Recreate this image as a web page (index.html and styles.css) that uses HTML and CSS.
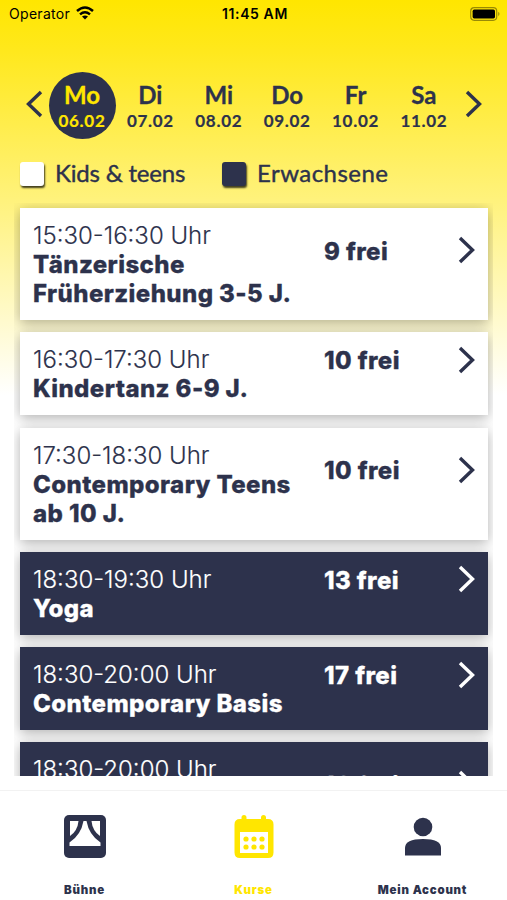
FILE: index.html
```
<!DOCTYPE html>
<html lang="de">
<head>
    <meta charset="UTF-8">
    <meta name="viewport" content="width=device-width, initial-scale=1.0">
    <title>Kurse</title>
    <link rel="stylesheet" href="styles.css">
</head>
<body>

<svg class="sprite" width="0" height="0">
    <symbol id="arrow" viewBox="0 0 17 28">
        <path d="M2 2 L14.5 14 L2 26" fill="none" stroke="currentColor" stroke-width="3.4"/>
    </symbol>
</svg>

<div class="status-bar">
    <div class="operator">
        <span>Operator</span>
        <svg class="wifi" viewBox="0 0 18 14">
            <path d="M1 5 Q9 -2 17 5" fill="none" stroke="#000" stroke-width="2.5"/>
            <path d="M4 8.3 Q9 4 14 8.3" fill="none" stroke="#000" stroke-width="2.4"/>
            <path d="M6 10.6 Q9 8.2 12 10.6 L9 13.6 Z"/>
        </svg>
    </div>
    <div class="clock">11:45 AM</div>
    <svg class="battery" viewBox="0 0 31 14">
        <rect x=".7" y=".7" width="26" height="12.6" rx="3.5" fill="none" stroke="#000" stroke-opacity=".4" stroke-width="1.2"/>
        <rect x="2.6" y="2.6" width="22.4" height="8.8" rx="1.6"/>
        <path d="M28.3 4.8 Q30.6 7 28.3 9.2 Z" fill-opacity=".45"/>
    </svg>
</div>

<div class="days">
    <svg class="arrow flip"><use href="#arrow"/></svg>
    <div class="week">
        <div class="day active"><b>Mo</b><span>06.02</span></div>
        <div class="day"><b>Di</b><span>07.02</span></div>
        <div class="day"><b>Mi</b><span>08.02</span></div>
        <div class="day"><b>Do</b><span>09.02</span></div>
        <div class="day"><b>Fr</b><span>10.02</span></div>
        <div class="day"><b>Sa</b><span>11.02</span></div>
    </div>
    <svg class="arrow"><use href="#arrow"/></svg>
</div>

<div class="legend">
    <div class="legend-item kids"><i class="box"></i><span>Kids &amp; teens</span></div>
    <div class="legend-item adults"><i class="box"></i><span>Erwachsene</span></div>
</div>

<div class="courses">
    <div class="card">
        <div class="info"><div class="time">15:30-16:30 Uhr</div><div class="name">Tänzerische<br>Früherziehung 3-5 J.</div></div>
        <div class="free">9 frei</div>
        <svg class="arrow"><use href="#arrow"/></svg>
    </div>
    <div class="card">
        <div class="info"><div class="time">16:30-17:30 Uhr</div><div class="name">Kindertanz 6-9 J.</div></div>
        <div class="free">10 frei</div>
        <svg class="arrow"><use href="#arrow"/></svg>
    </div>
    <div class="card">
        <div class="info"><div class="time">17:30-18:30 Uhr</div><div class="name">Contemporary Teens<br>ab 10 J.</div></div>
        <div class="free">10 frei</div>
        <svg class="arrow"><use href="#arrow"/></svg>
    </div>
    <div class="card dark">
        <div class="info"><div class="time">18:30-19:30 Uhr</div><div class="name">Yoga</div></div>
        <div class="free">13 frei</div>
        <svg class="arrow"><use href="#arrow"/></svg>
    </div>
    <div class="card dark">
        <div class="info"><div class="time">18:30-20:00 Uhr</div><div class="name">Contemporary Basis</div></div>
        <div class="free">17 frei</div>
        <svg class="arrow"><use href="#arrow"/></svg>
    </div>
    <div class="card dark last">
        <div class="info"><div class="time">18:30-20:00 Uhr</div></div>
        <div class="free">16 frei</div>
        <svg class="arrow"><use href="#arrow"/></svg>
    </div>
</div>

<nav class="tabs">
    <div class="tab">
        <svg viewBox="0 0 44 44">
            <rect x="1" y="1" width="42" height="43" rx="5" fill="#2d324c"/>
            <g fill="#fff">
                <path d="M7 7 H15.5 Q14.5 17 7 22 Z"/>
                <path d="M37 7 H28.5 Q29.5 17 37 22 Z"/>
                <path d="M20.5 7 H23.5 Q26 21 37.5 28.5 V32 H6.5 V28.5 Q18 21 20.5 7 Z"/>
            </g>
        </svg>
        <span>Bühne</span>
    </div>
    <div class="tab active">
        <svg viewBox="0 0 44 44">
            <path d="M8 5 H9.5 V3.5 Q9.5 1 12 1 T14.5 3.5 V5 H29 V3.5 Q29 1 31.5 1 T34 3.5 V5 H36 Q41.5 5 41.5 10.5 V38.5 Q41.5 44 36 44 H8 Q2.5 44 2.5 38.5 V10.5 Q2.5 5 8 5 Z" fill="#ffe600"/>
            <rect x="8" y="18" width="28" height="21" fill="#fff"/>
            <g fill="#ffe600">
                <circle cx="14" cy="25" r="2.6"/>
                <circle cx="22" cy="25" r="2.6"/>
                <circle cx="30" cy="25" r="2.6"/>
                <circle cx="14" cy="33" r="2.6"/>
                <circle cx="22" cy="33" r="2.6"/>
                <circle cx="30" cy="33" r="2.6"/>
            </g>
        </svg>
        <span>Kurse</span>
    </div>
    <div class="tab">
        <svg viewBox="0 0 44 44">
            <g fill="#2d324c">
                <circle cx="22" cy="13" r="9.3"/>
                <path d="M4 41.5 V34 Q4 25 22 25 T40 34 V41.5 Z"/>
            </g>
        </svg>
        <span>Mein Account</span>
    </div>
</nav>

</body>
</html>
```
FILE: styles.css
```
* {
    box-sizing: border-box;
}

body {
    margin: 0;
    height: 900px;
    overflow: hidden;
    display: flex;
    flex-direction: column;
    font-family: Inter, "Liberation Sans", sans-serif;
    color: #2d324c;
    background: linear-gradient(#ffe600 0, #ffe81c 50px, #fff27c 200px, #fff 395px);
}

.sprite {
    position: absolute;
}

/* status bar */
.status-bar {
    height: 28px;
    padding: 0 6px 0 9px;
    display: grid;
    grid-template-columns: 1fr auto 1fr;
    align-items: center;
    font-size: 14px;
    color: #000;
}

.operator {
    display: flex;
    align-items: center;
    gap: 6px;
    letter-spacing: 0.3px;
}

.operator span,
.clock {
    padding-bottom: 1px;
}

.wifi {
    width: 18px;
    height: 14px;
    margin-bottom: 2px;
}

.clock {
    font-weight: 600;
    letter-spacing: 0.6px;
}

.battery {
    width: 31px;
    height: 14px;
    justify-self: end;
    margin-bottom: 1px;
}

/* day picker */
.days {
    height: 67px;
    margin-top: 44px;
    padding: 0 25px 0 26px;
    display: flex;
    align-items: center;
    font-family: Lato, sans-serif;
}

.arrow {
    width: 17px;
    height: 28px;
    flex: none;
}

.flip {
    transform: scaleX(-1);
}

.days .arrow {
    margin-bottom: 3px;
}

.week {
    flex: 1;
    display: flex;
    gap: 1.4px;
    margin-left: 5.5px;
}

.day {
    width: 67px;
    height: 67px;
    flex: none;
    display: flex;
    flex-direction: column;
    align-items: center;
    padding-top: 9px;
    border-radius: 50%;
}

.day b {
    font-size: 24px;
    line-height: 28px;
    font-weight: 700;
    -webkit-text-stroke: 0.3px currentColor;
}

.day span {
    font-size: 17px;
    line-height: 24px;
    font-weight: 700;
    letter-spacing: 0.7px;
    -webkit-text-stroke: 0.2px currentColor;
}

.day.active {
    background: #2d324c;
    color: #ffe600;
}

/* legend */
.legend {
    height: 64px;
    padding: 5px 20px 0;
    display: flex;
    font-family: Lato, sans-serif;
    font-size: 24px;
    -webkit-text-stroke: 0.4px currentColor;
}

.legend-item {
    height: 60px;
    display: flex;
    align-items: center;
    gap: 11px;
}

.legend-item span {
    padding-bottom: 3px;
}

.kids {
    width: 202px;
    letter-spacing: -0.2px;
}

.adults {
    letter-spacing: 0.45px;
}

.box {
    width: 24px;
    height: 24px;
    border-radius: 3px;
    background: #fff;
    box-shadow: 1px 2px 2px rgba(0, 0, 0, 0.75);
}

.adults .box {
    background: #2d324c;
}

/* course list */
.courses {
    height: 573px;
    margin: 0 14px;
    padding: 5px 5.5px 0 6px;
    overflow: hidden;
    display: flex;
    flex-direction: column;
    gap: 12.3px;
}

.card {
    flex: none;
    display: flex;
    align-items: center;
    padding: 13px 12.5px 12px 13px;
    background: #fff;
    box-shadow: 0 3px 12px rgba(0, 0, 0, 0.31);
}

.card.dark {
    background: #2d324c;
    color: #fff;
}

.card.last {
    height: 112px;
}

.info {
    width: 291px;
    font-size: 24px;
    line-height: 29px;
    white-space: nowrap;
}

.last .info {
    align-self: flex-start;
}

.time {
    font-weight: 300;
    -webkit-text-stroke: 0.15px currentColor;
}

.name,
.free {
    font-weight: 800;
    letter-spacing: 0.42px;
    -webkit-text-stroke: 0.3px currentColor;
}

.free {
    flex: 1;
    font-size: 24px;
    line-height: 29px;
    margin: 0 0 27px;
}

.card .arrow {
    margin-bottom: 29px;
}

/* bottom tabs */
.tabs {
    height: 124px;
    border-top: 14px solid #fff;
    background: #fff;
    box-shadow: inset 0 1px 0 #f2f2f2;
    display: grid;
    grid-template-columns: repeat(3, 1fr);
}

.tab {
    display: flex;
    flex-direction: column;
    align-items: center;
    padding-top: 24px;
    font-size: 11.5px;
    font-weight: 900;
    letter-spacing: 0.75px;
}

.tab svg {
    width: 44px;
    height: 44px;
}

.tab span {
    margin-top: 25px;
    line-height: 14px;
}

.tab.active {
    color: #ffe600;
}
```
